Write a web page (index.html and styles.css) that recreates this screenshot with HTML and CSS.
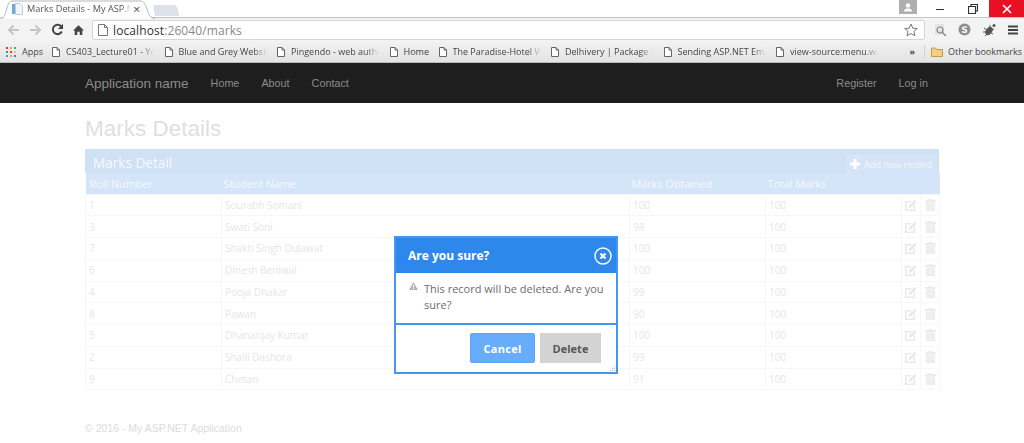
FILE: index.html
```html
<!DOCTYPE html>
<html lang="en">
<head>
<meta charset="utf-8">
<title>Marks Details - My ASP.NET Application</title>
<link rel="stylesheet" href="styles.css">
</head>
<body>
<header class="chrome">
  <div class="tabstrip">
    <div class="tab">
      <svg class="tab-shape" width="156" height="19" viewBox="0 0 156 19"><path d="M1 18.500 C4 18 5 15 7 8 C8 4 9 1 13 1 H140 C144 1 145 4 147 9 C149 15 150 18 155 18.500" fill="#fff" stroke="#b4b6b9"/></svg>
      <svg class="tab-fav" width="11" height="12" viewBox="0 0 11 12"><rect x="0" y="1" width="3" height="10" fill="#6fa8dc"/><path d="M3.500 .5H8L10.500 3V11.500H3.500Z" fill="#f3f4f6" stroke="#c4c8d0"/></svg>
      <span class="tab-title">Marks Details - My ASP.NET</span>
      <span class="tab-close">×</span>
    </div>
    <div class="newtab"></div>
    <div class="winctl">
      <div class="avatar"><svg width="10" height="9" viewBox="0 0 10 9"><circle cx="5" cy="2.500" r="2.200" fill="#fff"/><path d="M1 8.500C1 6 3 5.500 5 5.500S9 6 9 8.500Z" fill="#fff"/></svg></div>
      <div class="winbtn"><span class="min-bar"></span></div>
      <div class="winbtn"><svg width="10" height="10" viewBox="0 0 10 10"><path d="M3 2V.5H9.500V7H8M.5 2.500H7.500V9.500H.5Z" fill="none" stroke="#333" stroke-width="1.200"/></svg></div>
      <div class="winbtn close"><svg width="10" height="10" viewBox="0 0 10 10"><path d="M1 1L9 9M9 1L1 9" stroke="#fff" stroke-width="1.600"/></svg></div>
    </div>
  </div>
  <div class="toolbar">
    <svg class="tool" width="13" height="12" viewBox="0 0 13 12"><path d="M12 6H2M6.500 1.500L2 6L6.500 10.500" fill="none" stroke="#c3c5c8" stroke-width="2"/></svg>
    <svg class="tool" width="13" height="12" viewBox="0 0 13 12"><path d="M1 6H11M6.500 1.500L11 6L6.500 10.500" fill="none" stroke="#c3c5c8" stroke-width="2"/></svg>
    <svg class="tool" width="13" height="13" viewBox="0 0 13 13"><path d="M10.800 8.500A4.700 4.700 0 1 1 10.500 3.800" fill="none" stroke="#444" stroke-width="2"/><path d="M12 .8V6H7Z" fill="#444"/></svg>
    <svg class="tool" width="11" height="12" viewBox="0 0 13 12"><path d="M6.500 .5L13 6.500H11V12H8V8H5V12H2V6.500H0Z" fill="#444"/></svg>
    <div class="omnibox">
      <svg width="10" height="12" viewBox="0 0 10 12"><path d="M.5 .5H6.500L9.500 3.500V11.500H.5ZM6.500 .5V3.500H9.500" fill="#fff" stroke="#777"/></svg>
      <span class="url"><span class="host">localhost</span>:26040/marks</span>
      <svg class="star" width="14" height="14" viewBox="0 0 14 14"><path d="M7 1L8.800 5.200L13.300 5.500L9.900 8.400L11 12.900L7 10.500L3 12.900L4.100 8.400L.7 5.500L5.200 5.200Z" fill="#fff" stroke="#777"/></svg>
    </div>
    <div class="exts">
      <svg width="13" height="14" viewBox="0 0 13 14"><rect x="1" y="1" width="9" height="11" fill="#e4e4e4"/><circle cx="6" cy="7" r="3" fill="none" stroke="#888" stroke-width="1.200"/><path d="M8 9L12 13" stroke="#888" stroke-width="1.500"/></svg>
      <svg width="13" height="13" viewBox="0 0 14 14"><circle cx="7" cy="7" r="6.500" fill="#8d9093"/><path d="M9.500 4.800C8.500 3.800 4.800 3.800 4.800 5.600C4.800 7.400 9.400 6.600 9.400 8.500C9.400 10.300 5.500 10.200 4.500 9.200" fill="none" stroke="#fff" stroke-width="1.500"/></svg>
      <svg width="15" height="14" viewBox="0 0 15 14"><ellipse cx="7" cy="8" rx="3" ry="4.500" transform="rotate(40 7 8)" fill="#555"/><path d="M2 5L5 7M1 9L4 9M3 13L5 11M8 2L8 5M12 6L10 7M11 11L9 10" stroke="#555"/><circle cx="12" cy="2.500" r="1.500" fill="#555"/></svg>
      <svg width="10" height="10" viewBox="0 0 10 10"><path d="M0 1.500H10M0 5H10M0 8.500H10" stroke="#444" stroke-width="1.800"/></svg>
    </div>
  </div>
  <div class="bookmarks">
    <div class="bm apps"><svg width="10" height="10" viewBox="0 0 10 10"><rect width="2" height="2" fill="#e33"/><rect x="4" width="2" height="2" fill="#e8a33a"/><rect x="8" width="2" height="2" fill="#4a8"/><rect y="4" width="2" height="2" fill="#38d"/><rect x="4" y="4" width="2" height="2" fill="#e33"/><rect x="8" y="4" width="2" height="2" fill="#ec3"/><rect y="8" width="2" height="2" fill="#4a8"/><rect x="4" y="8" width="2" height="2" fill="#e8a33a"/><rect x="8" y="8" width="2" height="2" fill="#38d"/></svg><span>Apps</span></div>
    <div class="bm w113"><svg width="8" height="10" viewBox="0 0 8 10"><path d="M.5 .5H5L7.500 3V9.500H.5ZM5 .5V3H7.500" fill="#fff" stroke="#666"/></svg><span class="fade">CS403_Lecture01 - Yo</span></div>
    <div class="bm w113"><svg width="8" height="10" viewBox="0 0 8 10"><path d="M.5 .5H5L7.500 3V9.500H.5ZM5 .5V3H7.500" fill="#fff" stroke="#666"/></svg><span class="fade">Blue and Grey Website</span></div>
    <div class="bm w113"><svg width="8" height="10" viewBox="0 0 8 10"><path d="M.5 .5H5L7.500 3V9.500H.5ZM5 .5V3H7.500" fill="#fff" stroke="#666"/></svg><span class="fade">Pingendo - web autho</span></div>
    <div class="bm w50"><svg width="8" height="10" viewBox="0 0 8 10"><path d="M.5 .5H5L7.500 3V9.500H.5ZM5 .5V3H7.500" fill="#fff" stroke="#666"/></svg><span>Home</span></div>
    <div class="bm w113"><svg width="8" height="10" viewBox="0 0 8 10"><path d="M.5 .5H5L7.500 3V9.500H.5ZM5 .5V3H7.500" fill="#fff" stroke="#666"/></svg><span class="fade">The Paradise-Hotel W</span></div>
    <div class="bm w113"><svg width="8" height="10" viewBox="0 0 8 10"><path d="M.5 .5H5L7.500 3V9.500H.5ZM5 .5V3H7.500" fill="#fff" stroke="#666"/></svg><span class="fade">Delhivery | Package 36</span></div>
    <div class="bm w113"><svg width="8" height="10" viewBox="0 0 8 10"><path d="M.5 .5H5L7.500 3V9.500H.5ZM5 .5V3H7.500" fill="#fff" stroke="#666"/></svg><span class="fade">Sending ASP.NET Ema</span></div>
    <div class="bm w120"><svg width="8" height="10" viewBox="0 0 8 10"><path d="M.5 .5H5L7.500 3V9.500H.5ZM5 .5V3H7.500" fill="#fff" stroke="#666"/></svg><span class="fade">view-source:menu.wal</span></div>
    <div class="bm-right">
      <span class="more">»</span>
      <span class="bm-sep"></span>
      <svg width="12" height="10" viewBox="0 0 12 10"><path d="M.5 1H4.500L5.500 2.500H11.500V9.500H.5Z" fill="#f3ce85" stroke="#c19a4d"/></svg>
      <span>Other bookmarks</span>
    </div>
  </div>
</header>

<nav class="navbar">
  <div class="nav-inner">
    <a class="brand">Application name</a>
    <a class="nav-link">Home</a>
    <a class="nav-link">About</a>
    <a class="nav-link">Contact</a>
    <a class="nav-link push">Register</a>
    <a class="nav-link">Log in</a>
  </div>
</nav>

<main class="content">
  <h1 class="page-title">Marks Details</h1>
  <section class="panel">
    <div class="panel-head">
      <h2 class="panel-title">Marks Detail</h2>
      <a class="add-link"><svg width="10" height="10" viewBox="0 0 10 10"><path d="M5 0V10M0 5H10" stroke="#fff" stroke-width="3"/></svg>Add new record</a>
    </div>
    <table class="grid">
      <colgroup><col class="c1"><col class="c2"><col class="c3"><col class="c4"><col class="c5"><col class="c6"></colgroup>
      <thead>
        <tr><th>Roll Number</th><th>Student Name</th><th>Marks Obtained</th><th>Total Marks</th><th></th><th></th></tr>
      </thead>
      <tbody id="rows"></tbody>
    </table>
  </section>
  <footer class="foot">© 2016 - My ASP.NET Application</footer>
</main>

<div class="dialog" role="dialog">
  <div class="dialog-head">
    <span class="dialog-title">Are you sure?</span>
    <svg class="dialog-x" width="18" height="18" viewBox="0 0 18 18"><circle cx="9" cy="9" r="8" fill="none" stroke="#fff" stroke-width="1.400"/><path d="M6.500 6.500L11.500 11.500M11.500 6.500L6.500 11.500" stroke="#fff" stroke-width="2.200"/></svg>
  </div>
  <div class="dialog-body">
    <svg class="warn" width="9" height="8" viewBox="0 0 9 8"><path d="M4.500 0L9 8H0Z" fill="#b5b5b5"/><path d="M4.500 3V5.500M4.500 6.200V7" stroke="#fff"/></svg>
    <p class="dialog-text">This record will be deleted. Are you sure?</p>
  </div>
  <div class="dialog-foot">
    <button class="btn btn-cancel">Cancel</button>
    <button class="btn btn-delete">Delete</button>
  </div>
  <svg class="grip" width="6" height="6" viewBox="0 0 6 6"><path d="M4 0h1v1H4zM2 2h1v1H2zM4 2h1v1H4zM0 4h1v1H0zM2 4h1v1H2zM4 4h1v1H4z" fill="#bbb"/></svg>
</div>
<script src="app.js"></script>
</body>
</html>
```
FILE: styles.css
```css
* { box-sizing: border-box; }
html, body { margin: 0; padding: 0; }
body { width: 1024px; height: 443px; overflow: hidden; background: #fff; font-family: "Liberation Sans", Arial, sans-serif; position: relative; }

.chrome { height: 63px; font-family: "Open Sans", sans-serif; color: #444; }
.tabstrip { height: 18px; display: flex; background: #fff; border-bottom: 1px solid #c4c5c7; position: relative; }
.tab { width: 156px; height: 18px; position: relative; display: flex; align-items: center; padding-left: 12px; flex: none; }
.tab-shape { position: absolute; left: 0; top: 0; }
.tab-fav { position: relative; margin-right: 4px; }
.tab-title { position: relative; font-size: 9.200px; color: #555; width: 104px; white-space: nowrap; overflow: hidden; line-height: 18px; -webkit-mask-image: linear-gradient(90deg, #000 92%, transparent); mask-image: linear-gradient(90deg, #000 92%, transparent); }
.tab-close { position: relative; font-size: 13px; color: #555; margin-left: 2px; line-height: 18px; }
.newtab { width: 24px; height: 11px; margin: 5px 0 0 -2px; background: #dde2ea; border-radius: 3px 4px 0 0; transform: skewX(12deg); flex: none; }
.winctl { margin-left: auto; display: flex; height: 15px; flex: none; }
.avatar { width: 18px; height: 14px; background: #aeaeae; margin-right: 6px; display: flex; align-items: center; justify-content: center; }
.winbtn { width: 33px; height: 17px; display: flex; align-items: center; justify-content: center; }
.winbtn.close { width: 35px; background: #e81123; }
.min-bar { width: 8px; height: 1.500px; background: #333; margin-top: 2px; }

.toolbar { height: 23px; background: #f3f3f3; display: flex; align-items: center; padding-left: 7px; gap: 9px; }
.tool { flex: none; }
.omnibox { width: 833px; height: 20px; margin-left: -1px; background: #fff; border: 1px solid #d5d5d5; border-radius: 2px; display: flex; align-items: center; padding: 0 6px 0 5px; margin-top: 1px; flex: none; }
.url { font-family: "Open Sans", sans-serif; font-size: 12px; color: #888; margin-left: 5px; letter-spacing: .1px; }
.host { color: #333; }
.star { margin-left: auto; }
.exts { display: flex; align-items: center; gap: 11px; margin-left: 0; }

.bookmarks { height: 22px; background: linear-gradient(#f2f2f2, #e3e3e3); display: flex; align-items: center; padding-left: 6px; font-size: 9px; color: #444; position: relative; border-bottom: 1px solid #bbb; }
.bm { display: flex; align-items: center; white-space: nowrap; overflow: hidden; flex: none; }
.bm svg { flex: none; }
.bm span { margin-left: 6px; }
.apps { width: 46px; }
.w113 { width: 112.500px; }
.w50 { width: 49px; }
.w120 { width: 120px; }
.fade { display: block; width: 88px; overflow: hidden; -webkit-mask-image: linear-gradient(90deg, #000 85%, transparent); mask-image: linear-gradient(90deg, #000 85%, transparent); }
.bm-right { margin-left: auto; display: flex; align-items: center; gap: 5px; padding-right: 2px; white-space: nowrap; }
.more { font-weight: 700; margin-right: 4px; }
.bm-sep { width: 1px; height: 14px; background: #d4d4d4; margin-right: 1px; }

.navbar { height: 40px; background: #1e1e1e; }
.nav-inner { width: 854px; margin-left: 85px; height: 40px; display: flex; align-items: center; font-size: 10.800px; color: #8c8c8c; }
.brand { font-size: 13.500px; margin-right: 22px; }
.nav-link { margin-right: 22px; }
.nav-link.push { margin-left: auto; }
.nav-link:last-child { margin-right: 11px; }

.content { padding: 11px 85px 0; }
.page-title { margin: 0; height: 35px; font-weight: 400; font-size: 22.500px; line-height: 26px; padding-top: 2px; color: #e1dfdd; }
.panel { width: 854px; font-family: "Open Sans", sans-serif; }
.panel-head { height: 24px; background: #cfe1f5; display: flex; align-items: flex-end; justify-content: space-between; padding: 0 2px 0 8px; }
.panel-title { margin: 0 0 1px; font-size: 13.600px; font-weight: 400; color: #f6f9fc; }
.add-link { display: flex; align-items: center; height: 18px; gap: 4px; font-size: 9.200px; color: #f0f5fb; padding: 0 5px 0 4px; background: #d5e5f7; }
.grid { width: 854px; border-collapse: collapse; table-layout: fixed; font-size: 10px; }
.c1 { width: 136px; }
.c2 { width: 408px; }
.c3 { width: 136px; }
.c4 { width: 136px; }
.c5 { width: 19px; }
.c6 { width: 19px; }
.grid th { height: 21px; background: #d4e5fa; color: #f4f8fd; text-align: left; font-weight: 400; font-size: 10.800px; padding: 0 2px; }
.grid th:first-child { padding-left: 4px; }
.grid td { height: 21.750px; border: 1px solid #f7f7f7; color: #e6e6e6; padding: 0 3px; white-space: nowrap; }
.grid td.ico { padding: 0; text-align: center; line-height: 0; }

.foot { margin-top: 32px; font-family: "Liberation Sans", Arial, sans-serif; font-size: 10.500px; color: #dcdcdc; }

.dialog { position: absolute; left: 394px; top: 236px; width: 224px; height: 138px; background: #fff; border: 2px solid #4596f0; display: flex; flex-direction: column; font-family: "Open Sans", sans-serif; }
.dialog-head { height: 35px; background: #2e88ec; display: flex; align-items: center; justify-content: space-between; padding: 0 4px 0 12px; flex: none; }
.dialog-title { font-size: 12px; font-weight: 700; color: #fff; }
.dialog-body { height: 52px; border-bottom: 2px solid #4596f0; display: flex; padding: 8px 9px 0 12px; flex: none; }
.warn { flex: none; margin: 1px 6px 0 1px; }
.dialog-text { margin: 0; font-size: 11px; line-height: 15.500px; color: #6d6d6d; }
.dialog-foot { flex: 1; display: flex; justify-content: flex-end; align-items: flex-start; gap: 5px; padding: 8px 15px 0 0; }
.btn { height: 30px; border: 1px solid transparent; font-family: "Open Sans", sans-serif; font-size: 11px; font-weight: 700; padding: 0; }
.btn-cancel { width: 65px; background: #67adfb; border-color: #5ea6f8; color: #fff; border-radius: 2px; letter-spacing: .3px; }
.btn-delete { width: 61px; background: #d3d3d3; color: #555; }
.grip { position: absolute; right: 0; bottom: 0; }
```
FILE: app.js
```js
var data = [
  ["1", "Sourabh Somani", "100", "100"],
  ["3", "Swati Soni", "98", "100"],
  ["7", "Shakti Singh Dulawat", "100", "100"],
  ["6", "Dinesh Beniwal", "100", "100"],
  ["4", "Pooja Dhakar", "99", "100"],
  ["8", "Pawan", "90", "100"],
  ["5", "Dhananjay Kumar", "100", "100"],
  ["2", "Shaili Dashora", "99", "100"],
  ["9", "Chetan", "91", "100"]
];
var edit = '<svg width="12" height="12" viewBox="0 0 12 12"><path d="M0 2H7L5.500 3.500H1.500V10.500H8.500V7L10 5.500V12H0Z" fill="#e9e9e9"/><path d="M4 6.500L9.500 1L11.500 3L6 8.500L3.500 9Z" fill="#e9e9e9"/></svg>';
var trash = '<svg width="11" height="12" viewBox="0 0 11 12"><path d="M0 1H3.500V0H7.500V1H11V3H0ZM1 3.500H10V12H1Z" fill="#ececec"/><path d="M3 4.500V11M5.500 4.500V11M8 4.500V11" stroke="#f6f6f6" stroke-width=".7"/></svg>';
document.getElementById("rows").innerHTML = data.map(function (r) {
  return "<tr>" + r.map(function (c) { return "<td>" + c + "</td>"; }).join("") +
    '<td class="ico">' + edit + '</td><td class="ico">' + trash + "</td></tr>";
}).join("");
```
